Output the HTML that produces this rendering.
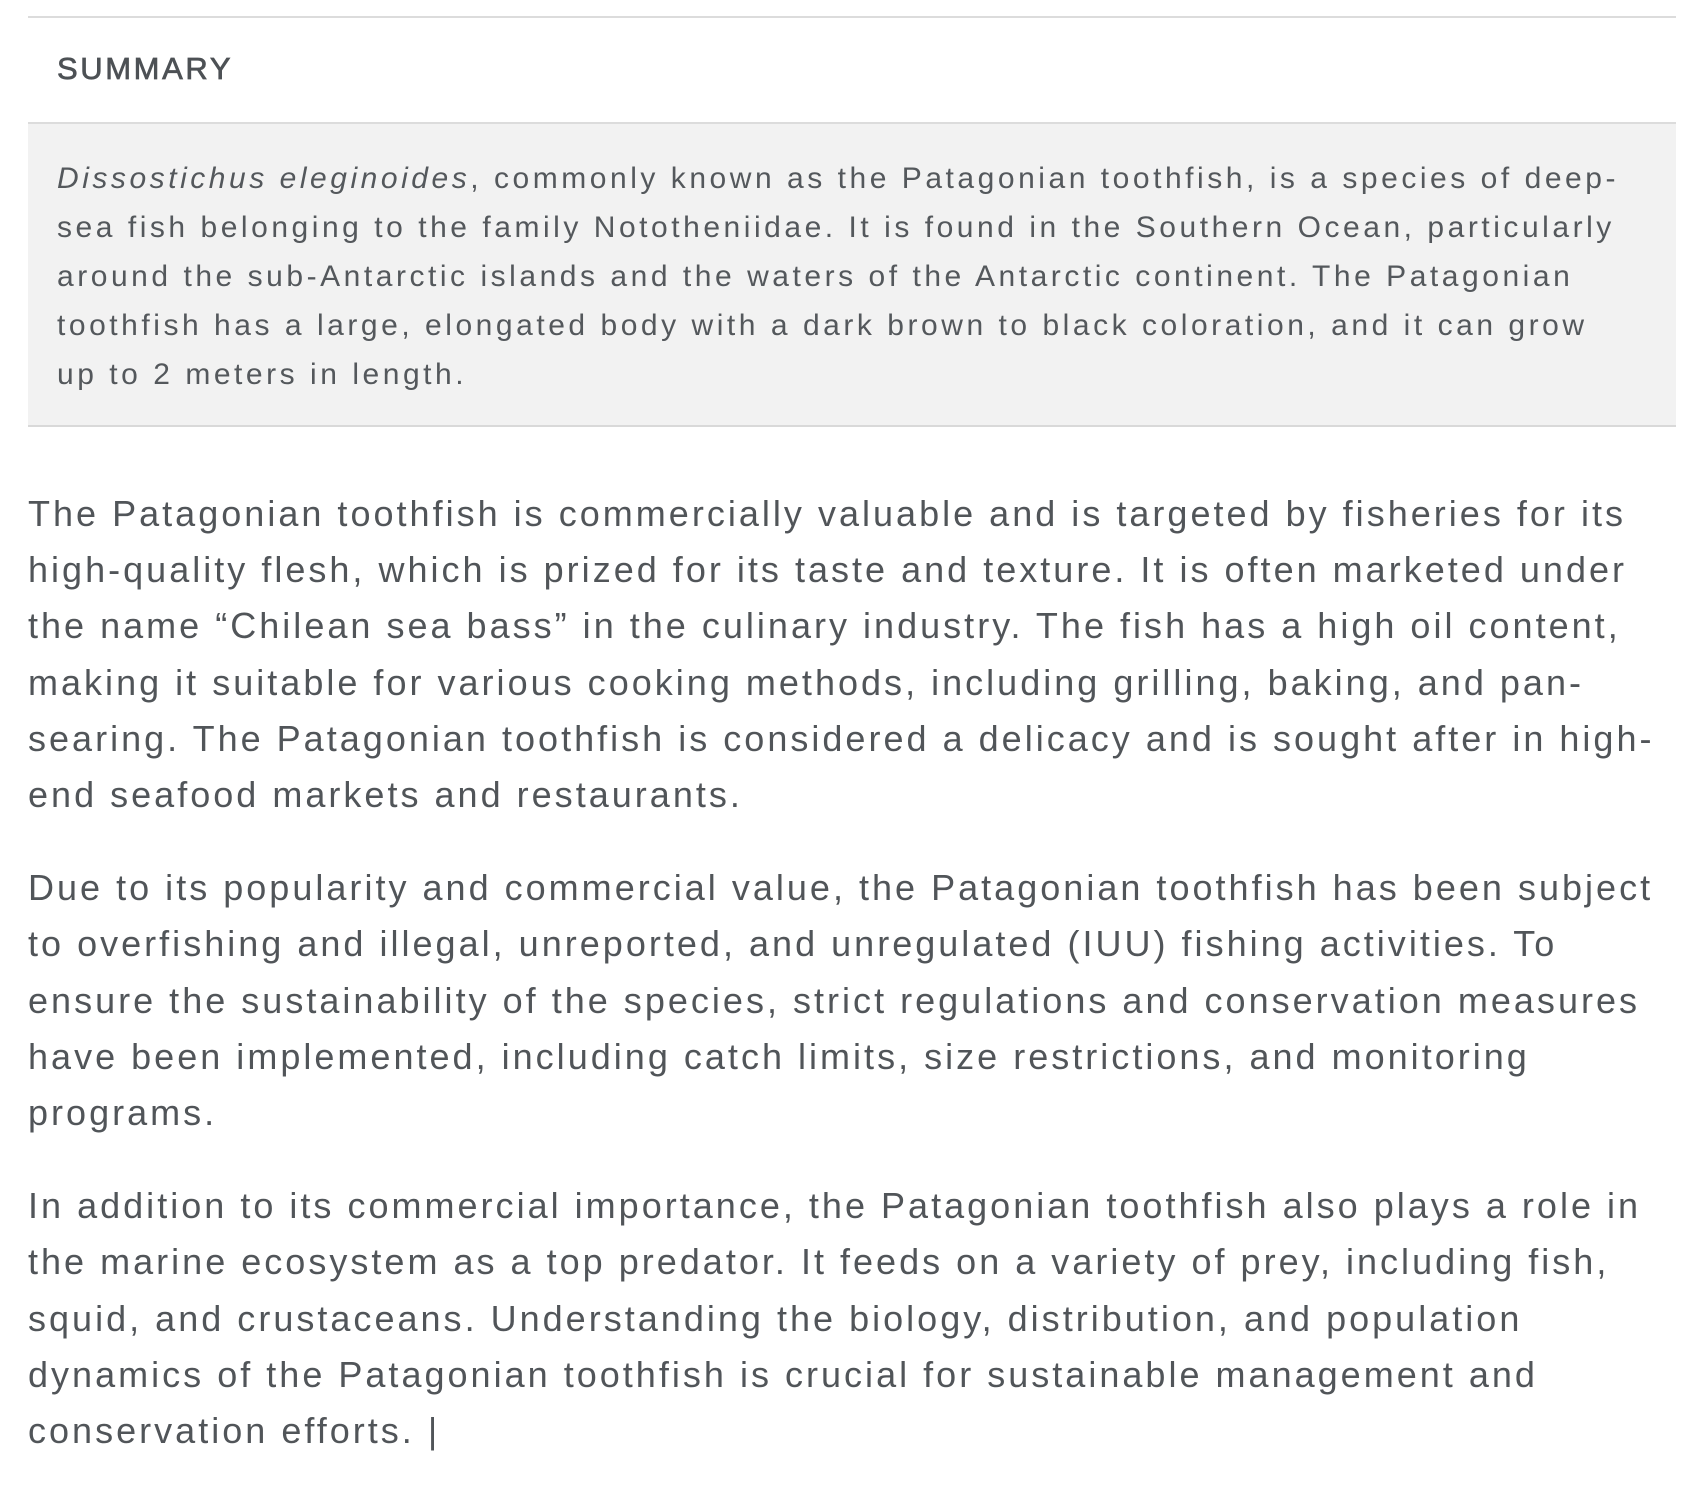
<!DOCTYPE html>
<html><head><meta charset="utf-8">
<style>
html,body{margin:0;padding:0;background:#fff;width:1707px;height:1476px;overflow:hidden}
body{font-family:"Liberation Sans",sans-serif;color:#54585c}
.wrap{position:absolute;left:28px;top:16px;width:1648px}
.hd{border-top:2px solid #dcdcdc;border-bottom:2px solid #dcdcdc;height:104px;box-sizing:content-box}
.hd span{position:absolute;left:29px;top:36px;font-size:31px;line-height:34px;letter-spacing:2.6px;color:#4d5155;-webkit-text-stroke:0.7px #4d5155}
.sum{background:#f2f2f2;border-bottom:2px solid #d9d9d9;padding:30px 0 26px 29px;height:245px}
.sum .l{font-size:30px;line-height:49px;white-space:nowrap}
.body{position:absolute;left:0;top:470px}
.body p{margin:0 0 37px 0}
.body .l{font-size:36px;line-height:56.2px;white-space:nowrap;color:#515559}
</style></head><body>
<div class="wrap">
<div class="hd"><span>SUMMARY</span></div>
<div class="sum" id="sum">
<div class="l"><i>Dissostichus eleginoides</i>, commonly known as the Patagonian toothfish, is a species of deep-</div>
<div class="l">sea fish belonging to the family Nototheniidae. It is found in the Southern Ocean, particularly</div>
<div class="l">around the sub-Antarctic islands and the waters of the Antarctic continent. The Patagonian</div>
<div class="l">toothfish has a large, elongated body with a dark brown to black coloration, and it can grow</div>
<div class="l">up to 2 meters in length.</div>
</div>
<div class="body" id="bd">
<p>
<span class="l" style="display:block">The Patagonian toothfish is commercially valuable and is targeted by fisheries for its</span>
<span class="l" style="display:block">high-quality flesh, which is prized for its taste and texture. It is often marketed under</span>
<span class="l" style="display:block">the name “Chilean sea bass” in the culinary industry. The fish has a high oil content,</span>
<span class="l" style="display:block">making it suitable for various cooking methods, including grilling, baking, and pan-</span>
<span class="l" style="display:block">searing. The Patagonian toothfish is considered a delicacy and is sought after in high-</span>
<span class="l" style="display:block">end seafood markets and restaurants.</span>
</p>
<p>
<span class="l" style="display:block">Due to its popularity and commercial value, the Patagonian toothfish has been subject</span>
<span class="l" style="display:block">to overfishing and illegal, unreported, and unregulated (IUU) fishing activities. To</span>
<span class="l" style="display:block">ensure the sustainability of the species, strict regulations and conservation measures</span>
<span class="l" style="display:block">have been implemented, including catch limits, size restrictions, and monitoring</span>
<span class="l" style="display:block">programs.</span>
</p>
<p>
<span class="l" style="display:block">In addition to its commercial importance, the Patagonian toothfish also plays a role in</span>
<span class="l" style="display:block">the marine ecosystem as a top predator. It feeds on a variety of prey, including fish,</span>
<span class="l" style="display:block">squid, and crustaceans. Understanding the biology, distribution, and population</span>
<span class="l" style="display:block">dynamics of the Patagonian toothfish is crucial for sustainable management and</span>
<span class="l" style="display:block">conservation efforts. |</span>
</p>
</div>
</div>
<script>
function fit(sel,target){
  var els=document.querySelectorAll(sel);var e=els[0];
  var s=document.createElement('span');s.style.whiteSpace='nowrap';s.innerHTML=e.innerHTML;
  e.innerHTML='';e.appendChild(s);var w=s.getBoundingClientRect().width;
  var n=s.textContent.length;var ls=(target-w)/n;
  e.innerHTML=s.innerHTML;
  for(var i=0;i<els.length;i++)els[i].style.letterSpacing=ls+'px';
}
fit('#sum .l',1562);
fit('#bd .l',1598);
</script>
</body></html>
